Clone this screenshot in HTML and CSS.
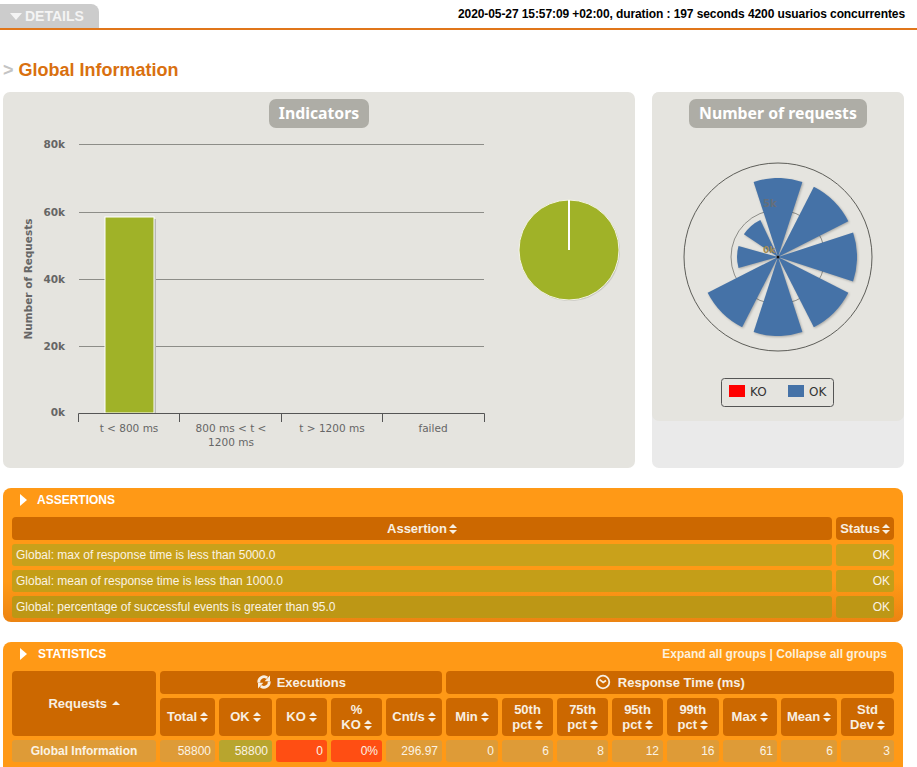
FILE: index.html
```html
<!DOCTYPE html>
<html lang="en">
<head>
    <meta charset="UTF-8">
    <meta name="viewport" content="width=device-width, initial-scale=1.0">
    <title>Global Information</title>
    <link rel="stylesheet" href="styles.css">
</head>

<body>
    <div class="topbar">
        <div class="details-tab"><span class="arrow-down"></span>DETAILS</div>
        <div class="run-info">2020-05-27 15:57:09 +02:00, duration : 197 seconds 4200 usuarios concurrentes</div>
    </div>

    <h1 class="page-title"><span class="title-mark">&gt;</span> Global Information</h1>

    <div class="charts">
        <div class="chart-panel chart-left">
            <div class="pill">Indicators</div>
            <svg class="chart-svg" width="632" height="340" viewBox="3 128 632 340">
                <g class="grid">
                    <line x1="79" y1="144.5" x2="484" y2="144.5"/>
                    <line x1="79" y1="212.5" x2="484" y2="212.5"/>
                    <line x1="79" y1="279.5" x2="484" y2="279.5"/>
                    <line x1="79" y1="346.5" x2="484" y2="346.5"/>
                </g>
                <g class="y-labels">
                    <text x="65" y="148">80k</text>
                    <text x="65" y="216">60k</text>
                    <text x="65" y="283">40k</text>
                    <text x="65" y="350">20k</text>
                    <text x="65" y="416">0k</text>
                </g>
                <text class="y-title" transform="translate(32 279) rotate(-90)">Number of Requests</text>
                <rect class="bar-shadow" x="107" y="219" width="49" height="194"/>
                <rect class="bar" x="105" y="217" width="49" height="196"/>
                <path class="axis" d="M78.5 422V413.5H484.5V422M179.5 413.5V422M281.5 413.5V422M382.5 413.5V422"/>
                <g class="x-labels">
                    <text x="129" y="432">t &lt; 800 ms</text>
                    <text x="231" y="432">800 ms &lt; t &lt;</text>
                    <text x="231" y="446">1200 ms</text>
                    <text x="332" y="432">t &gt; 1200 ms</text>
                    <text x="433" y="432">failed</text>
                </g>
                <circle class="pie-shadow" cx="570" cy="251" r="50"/>
                <circle class="pie" cx="569" cy="250" r="50"/>
                <line class="pie-cut" x1="569" y1="200" x2="569" y2="250"/>
            </svg>
        </div>

        <div class="chart-panel chart-right">
            <div class="chart-right-top">
                <div class="pill">Number of requests</div>
                <svg class="chart-svg" width="252" height="293" viewBox="652 128 252 293">
                    <g transform="translate(778 257)">
                        <circle class="polar-ring" r="94"/>
                        <circle class="polar-inner" r="47"/>
                        <g class="wedges">
                            <path d="M0 0L-24.4 -75.1A79 79 0 0 1 24.4 -75.1Z"/>
                            <path transform="rotate(45)" d="M0 0L-24.4 -75.1A79 79 0 0 1 24.4 -75.1Z"/>
                            <path transform="rotate(90)" d="M0 0L-24.4 -75.1A79 79 0 0 1 24.4 -75.1Z"/>
                            <path transform="rotate(135)" d="M0 0L-24.4 -75.1A79 79 0 0 1 24.4 -75.1Z"/>
                            <path transform="rotate(180)" d="M0 0L-24.4 -75.1A79 79 0 0 1 24.4 -75.1Z"/>
                            <path transform="rotate(225)" d="M0 0L-24.4 -75.1A79 79 0 0 1 24.4 -75.1Z"/>
                            <path transform="rotate(270)" d="M0 0L-10.9 -39.5A41 41 0 0 1 10.9 -39.5Z"/>
                            <path transform="rotate(319)" d="M0 0L-10.9 -39.5A41 41 0 0 1 10.9 -39.5Z"/>
                        </g>
                        <text class="polar-label" x="-15" y="-50">5k</text>
                        <text class="polar-zero" x="-15" y="-4">0k</text>
                        <circle class="polar-center" r="1.5"/>
                    </g>
                    <rect class="legend-box" x="721.5" y="378.5" width="112" height="28" rx="3"/>
                    <rect class="swatch-ko" x="729" y="385" width="16" height="12"/>
                    <text class="legend-text" x="750" y="396">KO</text>
                    <rect class="swatch-ok" x="788" y="385" width="16" height="12"/>
                    <text class="legend-text" x="809" y="396">OK</text>
                </svg>
            </div>
        </div>
    </div>

    <div class="box assertions">
        <div class="box-head">
            <span class="arrow-right"></span>
            <span class="box-title">ASSERTIONS</span>
        </div>
        <table class="data-table">
            <thead>
                <tr>
                    <th class="assert-name">Assertion<span class="sort"></span></th>
                    <th class="assert-status">Status<span class="sort"></span></th>
                </tr>
            </thead>
            <tbody>
                <tr class="row-a"><td>Global: max of response time is less than 5000.0</td><td class="num">OK</td></tr>
                <tr class="row-b"><td>Global: mean of response time is less than 1000.0</td><td class="num">OK</td></tr>
                <tr class="row-c"><td>Global: percentage of successful events is greater than 95.0</td><td class="num">OK</td></tr>
            </tbody>
        </table>
    </div>

    <div class="box statistics">
        <div class="box-head">
            <span class="arrow-right"></span>
            <span class="box-title">STATISTICS</span>
            <span class="group-links">Expand all groups | Collapse all groups</span>
        </div>
        <table class="data-table stats-table">
            <colgroup>
                <col class="c-req">
                <col class="c-total"><col class="c-ok"><col class="c-ko"><col class="c-pko"><col class="c-cnt">
                <col class="c-min"><col class="c-p50"><col class="c-p75"><col class="c-p95"><col class="c-p99">
                <col class="c-max"><col class="c-mean"><col class="c-std">
            </colgroup>
            <thead>
                <tr class="group-row">
                    <th rowspan="2">Requests <span class="sort-up"></span></th>
                    <th colspan="5">
                        <svg class="group-icon refresh" width="16" height="16" viewBox="0 0 16 16">
                            <path class="refresh-arc" d="M2.8 8.6A5.2 5.2 0 0 1 11.2 3.9"/>
                            <path class="refresh-arc" d="M13.2 7.4A5.2 5.2 0 0 1 4.8 12.1"/>
                            <path class="refresh-head" d="M14 1.6V7.2H8.6Z"/>
                            <path class="refresh-head" d="M2 14.4V8.8H7.4Z"/>
                        </svg>
                        Executions
                    </th>
                    <th colspan="8">
                        <svg class="group-icon clock" width="16" height="16" viewBox="0 0 16 16">
                            <circle cx="8" cy="8" r="6.3"/>
                            <path d="M4.6 5.6L8.2 8.4L11 6.6"/>
                        </svg>
                        Response Time (ms)
                    </th>
                </tr>
                <tr class="head-row">
                    <th>Total<span class="sort"></span></th>
                    <th>OK<span class="sort"></span></th>
                    <th>KO<span class="sort"></span></th>
                    <th>%<br>KO<span class="sort"></span></th>
                    <th>Cnt/s<span class="sort"></span></th>
                    <th>Min<span class="sort"></span></th>
                    <th>50th<br>pct<span class="sort"></span></th>
                    <th>75th<br>pct<span class="sort"></span></th>
                    <th>95th<br>pct<span class="sort"></span></th>
                    <th>99th<br>pct<span class="sort"></span></th>
                    <th>Max<span class="sort"></span></th>
                    <th>Mean<span class="sort"></span></th>
                    <th>Std<br>Dev<span class="sort"></span></th>
                </tr>
            </thead>
            <tbody>
                <tr class="total-row">
                    <td class="req-name">Global Information</td>
                    <td class="num">58800</td>
                    <td class="num cell-ok">58800</td>
                    <td class="num cell-ko">0</td>
                    <td class="num cell-ko">0%</td>
                    <td class="num">296.97</td>
                    <td class="num">0</td>
                    <td class="num">6</td>
                    <td class="num">8</td>
                    <td class="num">12</td>
                    <td class="num">16</td>
                    <td class="num">61</td>
                    <td class="num">6</td>
                    <td class="num">3</td>
                </tr>
            </tbody>
        </table>
    </div>
</body>
</html>
```

FILE: styles.css
```css
* {
   box-sizing: border-box;
}

html {
   overflow: hidden;
}

body {
   margin: 0;
   width: 917px;
   height: 767px;
   overflow: hidden;
   background-color: #fff;
   font-family: "Liberation Sans", Arial, sans-serif;
   font-size: 12px;
}

/* Top bar */
.topbar {
   display: flex;
   justify-content: space-between;
   align-items: flex-end;
   height: 30px;
   padding: 4px 12px 0 0;
   border-bottom: 2px solid #e0761a;
}

.details-tab {
   display: flex;
   align-items: center;
   width: 99px;
   height: 24px;
   padding-left: 10px;
   background-color: #ccc;
   border-radius: 0 8px 0 0;
   color: #f4f4f4;
   font-size: 14px;
   font-weight: bold;
}

.arrow-down {
   width: 0;
   height: 0;
   margin-right: 3px;
   border-left: 6px solid transparent;
   border-right: 6px solid transparent;
   border-top: 7px solid #f4f4f4;
}

.run-info {
   padding-bottom: 7px;
   color: #000;
   font-weight: bold;
   line-height: 14px;
   letter-spacing: -0.09px;
}

.page-title {
   margin: 29px 0 11px 3px;
   color: #d9700f;
   font-size: 18px;
   line-height: 22px;
   font-weight: bold;
}

.title-mark {
   color: #c4c4c4;
}

/* Charts */
.charts {
   display: flex;
   gap: 17px;
   margin: 0 0 20px 3px;
}

.chart-panel {
   display: flex;
   flex-direction: column;
   align-items: center;
   height: 376px;
   border-radius: 7px;
}

.chart-left {
   width: 632px;
   padding-top: 7px;
   background-color: #e5e4df;
}

.chart-right {
   width: 252px;
   background-color: #eaeaea;
}

.chart-right-top {
   display: flex;
   flex-direction: column;
   align-items: center;
   width: 252px;
   height: 329px;
   padding-top: 7px;
   background-color: #e5e4df;
   border-radius: 7px;
}

.pill {
   flex: none;
   height: 29px;
   padding: 0 10px;
   background-color: #aeada6;
   border-radius: 7px;
   color: #fff;
   font-family: "Noto Sans", sans-serif;
   font-size: 15.8px;
   font-weight: bold;
   line-height: 28px;
}

.chart-svg {
   display: block;
   flex: none;
   font-family: "DejaVu Sans", sans-serif;
}

.grid line {
   stroke: #8d8d88;
   stroke-width: 1;
}

.y-labels text {
   fill: #666;
   font-size: 10.5px;
   font-weight: bold;
   text-anchor: end;
}

.y-title {
   fill: #666;
   font-size: 10.5px;
   font-weight: bold;
   text-anchor: middle;
}

.x-labels text {
   fill: #666;
   font-size: 10.5px;
   text-anchor: middle;
}

.axis {
   fill: none;
   stroke: #555;
   stroke-width: 1;
}

.bar {
   fill: #a0b228;
   stroke: #fff;
   stroke-width: 1;
}

.bar-shadow {
   fill: #b9b8b3;
}

.pie {
   fill: #a0b228;
   stroke: #f4f4e4;
   stroke-width: 1;
}

.pie-shadow {
   fill: #c9c8c4;
}

.pie-cut {
   stroke: #fff;
   stroke-width: 2;
}

.polar-ring {
   fill: none;
   stroke: #5d5d58;
   stroke-width: 1;
}

.polar-inner {
   fill: none;
   stroke: #8d8d88;
   stroke-width: 1;
}

.polar-label {
   fill: rgba(110, 110, 110, 0.8);
   font-size: 10px;
   font-weight: bold;
}

.polar-zero {
   fill: #a08a50;
   font-size: 9px;
   font-weight: bold;
}

.wedges path {
   fill: #4572a7;
}

.wedges {
   filter: drop-shadow(1px 1px 1px rgba(0, 0, 0, 0.25));
}

.polar-center {
   fill: #111;
}

.legend-box {
   fill: none;
   stroke: #555;
   stroke-width: 1;
}

.swatch-ko {
   fill: #f00;
}

.swatch-ok {
   fill: #4572a7;
}

.legend-text {
   fill: #333;
   font-size: 12px;
}

/* Orange boxes */
.box {
   width: 900px;
   margin-left: 3px;
   padding: 0 9px;
   border-radius: 8px;
   background-color: #ff9916;
   color: #fff;
}

.assertions {
   height: 134px;
   margin-bottom: 20px;
   background-image: linear-gradient(to bottom, #ff9916 70%, #ec8412 100%);
}

.statistics {
   height: 140px;
}

.box-head {
   display: flex;
   align-items: center;
   height: 25px;
   padding: 0 7px 2px 8px;
}

.arrow-right {
   width: 0;
   height: 0;
   margin-right: 10px;
   border-top: 6px solid transparent;
   border-bottom: 6px solid transparent;
   border-left: 7px solid #fff;
}

.statistics .arrow-right {
   margin-right: 11px;
}

.box-title {
   font-weight: bold;
}

.group-links {
   margin-left: auto;
   color: #fdf0dc;
   font-weight: bold;
}

/* Tables */
.data-table {
   width: 890px;
   margin-left: -4px;
   table-layout: fixed;
   border-collapse: separate;
   border-spacing: 4px;
}

.data-table th {
   padding: 0 2px 1px;
   background-color: #cc6800;
   border-radius: 4px;
   font-size: 13px;
   font-weight: bold;
   line-height: 15px;
   text-align: center;
   color: #f8efe2;
}

.data-table td {
   height: 22px;
   padding: 0 3px 0 4px;
   border-radius: 3px;
   color: #fbf3e4;
   line-height: 14px;
}

.assertions th {
   height: 23px;
}

.assert-status {
   width: 58px;
}

.data-table .num {
   padding-right: 4px;
   text-align: right;
}

.row-a td {
   background-color: #c9a11b;
}

.row-b td {
   background-color: #c49e18;
}

.row-c td {
   background-color: #bd9715;
}

.sort {
   display: inline-block;
   position: relative;
   width: 8px;
   height: 10px;
   margin-left: 2px;
   vertical-align: -1px;
}

.sort::before,
.sort::after {
   content: "";
   position: absolute;
   left: 0;
   border-left: 4px solid transparent;
   border-right: 4px solid transparent;
}

.sort::before {
   top: 0;
   border-bottom: 4.5px solid #f8efe2;
}

.sort::after {
   bottom: 0;
   border-top: 4.5px solid #f8efe2;
}

.sort-up {
   display: inline-block;
   margin-left: 1px;
   vertical-align: 3px;
   border-left: 4px solid transparent;
   border-right: 4px solid transparent;
   border-bottom: 4.5px solid #f8efe2;
}

.head-row th .sort {
   margin-left: 3px;
}

.stats-table .group-row th {
   height: 23px;
}

.stats-table .head-row th {
   height: 38px;
}

.group-icon {
   margin-right: 1px;
   vertical-align: -3px;
}

.refresh-arc {
   fill: none;
   stroke: #f8efe2;
   stroke-width: 2.8;
}

.refresh-head {
   fill: #f8efe2;
}

.group-icon.clock {
   margin-right: 3px;
   fill: none;
   stroke: #f8efe2;
   stroke-width: 1.8;
}

.c-req { width: 144px; }
.c-total { width: 55px; }
.c-ok { width: 53px; }
.c-ko { width: 51px; }
.c-pko { width: 51px; }
.c-cnt { width: 56px; }
.c-min { width: 52px; }
.c-p50 { width: 51px; }
.c-p75 { width: 51px; }
.c-p95 { width: 51px; }
.c-p99 { width: 51.5px; }
.c-max { width: 54.5px; }
.c-mean { width: 56px; }
.c-std { width: 53px; }

.total-row td {
   background-color: #de9b37;
}

.total-row .req-name {
   padding: 0;
   font-weight: bold;
   text-align: center;
}

.total-row .cell-ok {
   background-color: #b8a52e;
}

.total-row .cell-ko {
   background-color: #ff4e13;
}
```
